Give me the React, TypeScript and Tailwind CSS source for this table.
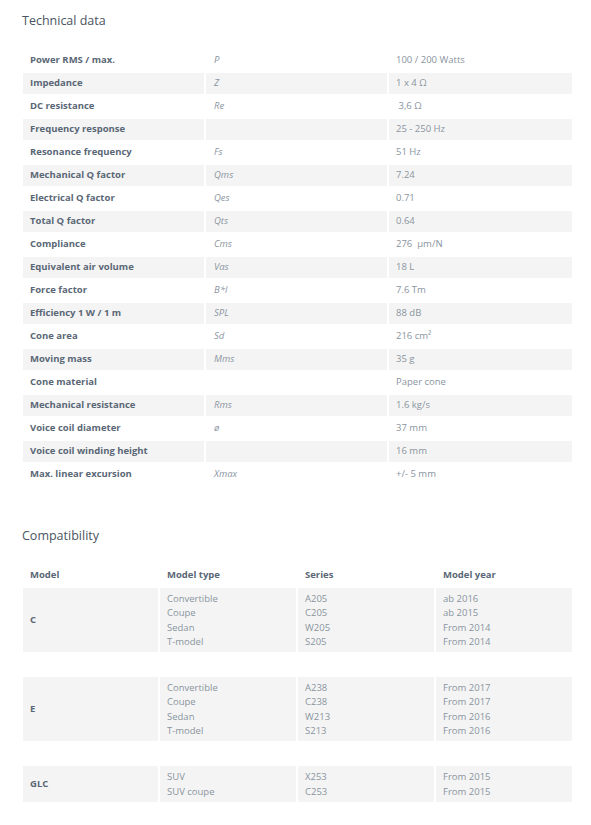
import React from "react";

const tech: [string, string, string][] = [
  ["Power RMS / max.", "P", "100 / 200 Watts"],
  ["Impedance", "Z", "1 x 4 Ω"],
  ["DC resistance", "Re", "\u00a03,6 Ω"],
  ["Frequency response", "", "25 - 250 Hz"],
  ["Resonance frequency", "Fs", "51 Hz"],
  ["Mechanical Q factor", "Qms", "7.24"],
  ["Electrical Q factor", "Qes", "0.71"],
  ["Total Q factor", "Qts", "0.64"],
  ["Compliance", "Cms", "276 \u00a0µm/N"],
  ["Equivalent air volume", "Vas", "18 L"],
  ["Force factor", "B*l", "7.6 Tm"],
  ["Efficiency 1 W / 1 m", "SPL", "88 dB"],
  ["Cone area", "Sd", "216 cm²"],
  ["Moving mass", "Mms", "35 g"],
  ["Cone material", "", "Paper cone"],
  ["Mechanical resistance", "Rms", "1.6 kg/s"],
  ["Voice coil diameter", "ø", "37 mm"],
  ["Voice coil winding height", "", "16 mm"],
  ["Max. linear excursion", "Xmax", "+/- 5 mm"],
];

const compat: { model: string; types: string[]; series: string[]; years: string[] }[] = [
  {
    model: "C",
    types: ["Convertible", "Coupe", "Sedan", "T-model"],
    series: ["A205", "C205", "W205", "S205"],
    years: ["ab 2016", "ab 2015", "From 2014", "From 2014"],
  },
  {
    model: "E",
    types: ["Convertible", "Coupe", "Sedan", "T-model"],
    series: ["A238", "C238", "W213", "S213"],
    years: ["From 2017", "From 2017", "From 2016", "From 2016"],
  },
  {
    model: "GLC",
    types: ["SUV", "SUV coupe"],
    series: ["X253", "C253"],
    years: ["From 2015", "From 2015"],
  },
];

function Lines({ items }: { items: string[] }) {
  return (
    <div className="leading-[14.3px]">
      {items.map((t, i) => (
        <div key={i}>{t}</div>
      ))}
    </div>
  );
}

export default function App() {
  return (
    <div className="min-h-[825px] bg-white px-[21px] pt-[12px] font-['Open_Sans',sans-serif] text-[9.5px]">
      <h2 className="ml-[1px] text-[12.5px] leading-[17px] text-[#4a5561]">Technical data</h2>
      <table className="mt-[19px] w-[553px] table-fixed border-separate border-spacing-[2px]">
        <tbody>
          {tech.map(([label, sym, val], i) => {
            const bg = i % 2 === 1 ? "bg-[#f4f4f4]" : "";
            return (
              <tr key={i} className="h-[21px]">
                <td className={`w-[181px] py-0 pl-[7px] align-middle font-bold text-[#5a6776] ${bg}`}>{label}</td>
                <td className={`w-[181px] py-0 pl-[8px] align-middle italic text-[#8c96a2] ${bg}`}>{sym}</td>
                <td className={`w-[183px] py-0 pl-[7px] align-middle text-[#8a94a0] ${bg}`}>{val}</td>
              </tr>
            );
          })}
        </tbody>
      </table>

      <h2 className="ml-[1px] mt-[40px] text-[12.5px] leading-[17px] text-[#4a5561]">Compatibility</h2>
      <table className="mt-[19px] w-[553px] table-fixed border-separate border-spacing-[2px]">
        <tbody>
          <tr className="h-[21px]">
            <td className="w-[135px] py-0 pl-[7px] align-middle font-bold text-[#5a6776]">Model</td>
            <td className="w-[136px] py-0 pl-[7px] align-middle font-bold text-[#5a6776]">Model type</td>
            <td className="w-[136px] py-0 pl-[7px] align-middle font-bold text-[#5a6776]">Series</td>
            <td className="w-[136px] py-0 pl-[7px] align-middle font-bold text-[#5a6776]">Model year</td>
          </tr>
          {compat.map((c, i) => (
            <React.Fragment key={c.model}>
              {i > 0 && (
                <tr className="h-[21px]">
                  <td colSpan={4} />
                </tr>
              )}
              <tr>
                <td className="bg-[#f4f4f4] py-[3px] pl-[7px] align-middle font-bold text-[#5a6776]">{c.model}</td>
                <td className="bg-[#f4f4f4] pb-[3px] pt-[4px] pl-[7px] align-middle text-[#8a94a0]">
                  <Lines items={c.types} />
                </td>
                <td className="bg-[#f4f4f4] pb-[3px] pt-[4px] pl-[7px] align-middle text-[#8a94a0]">
                  <Lines items={c.series} />
                </td>
                <td className="bg-[#f4f4f4] pb-[3px] pt-[4px] pl-[7px] align-middle text-[#8a94a0]">
                  <Lines items={c.years} />
                </td>
              </tr>
            </React.Fragment>
          ))}
        </tbody>
      </table>
    </div>
  );
}
